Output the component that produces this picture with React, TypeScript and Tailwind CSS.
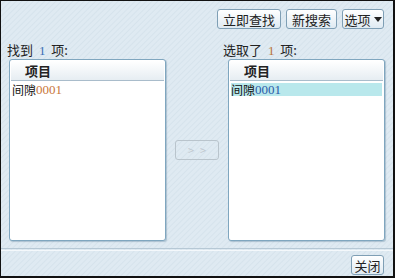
import React from "react";

const cjk = "font-['Noto_Sans_CJK_SC','Liberation_Sans',sans-serif]";
const num = "font-['Liberation_Serif',serif]";

function Btn({ children, className = "" }: { children: React.ReactNode; className?: string }) {
  return (
    <button
      type="button"
      className={`flex h-[20px] items-center justify-center whitespace-nowrap rounded-[3px] border border-[#7f9fb5] bg-gradient-to-b from-white to-[#dfeaf2] text-[13px] leading-none text-[#222] ${cjk} ${className}`}
    >
      {children}
    </button>
  );
}

function ListBox({ selected }: { selected?: boolean }) {
  return (
    <div className="flex h-[182px] w-[157px] flex-col overflow-hidden rounded-[3px] border border-[#7fa6bf] bg-white shadow-[1px_1px_1px_rgba(80,120,150,0.35)]">
      <div className="m-[1px] flex h-[20px] items-center border-b border-[#a9bccb] bg-gradient-to-b from-white to-[#e6edf2] pl-[14px] text-[13px] font-bold text-[#222]">
        项目
      </div>
      <div className="px-[2px] pt-[1px]">
        <div
          className={`flex h-[13px] items-center text-[12px] leading-none text-[#111] ${
            selected ? "bg-[#b9e8ec]" : ""
          }`}
        >
          <span className={cjk}>间隙</span>
          <span className={`${num} text-[13px] ${selected ? "text-[#2a5aa8]" : "text-[#c8763a]"}`}>0001</span>
        </div>
      </div>
    </div>
  );
}

export default function App() {
  return (
    <div className="h-[278px] w-[395px] border-b-2 border-l border-r-2 border-t border-[#111]">
      <div
        className={`flex h-full flex-col bg-[#dbe7f0] bg-[repeating-linear-gradient(135deg,#dfeaf2_0px,#dfeaf2_2px,#d6e3ec_3px,#dfeaf2_4px)] ${cjk}`}
      >
        <div className="flex justify-end gap-[5px] pr-[9px] pt-[8px]">
          <Btn className="w-[64px]">立即查找</Btn>
          <Btn className="w-[51px]">新搜索</Btn>
          <Btn className="w-[42px] gap-[3px]">
            选项
            <svg width="8" height="5" viewBox="0 0 8 5">
              <path d="M0 0h8L4 5z" fill="#222" />
            </svg>
          </Btn>
        </div>

        <div className="mt-[14px] flex">
          <div className="flex flex-col pl-[6px]">
            <div className="h-[15px] whitespace-pre text-[13px] leading-[14px] text-[#222]">
              找到 <span className={`${num} px-[3px] text-[#3b6fb6]`}>1</span> 项:
            </div>
            <div className="ml-[2px] mt-[1px]">
              <ListBox />
            </div>
          </div>
          <div className="flex w-[62px] items-center justify-center pt-[16px]">
            <div className="flex h-[20px] w-[44px] items-center justify-center gap-[6px] rounded-[3px] border border-[#b9c4cc] text-[11px] text-[#bfc8cf]">
              <span>&gt;</span>
              <span>&gt;</span>
            </div>
          </div>
          <div className="flex flex-col">
            <div className="-ml-[5px] h-[15px] whitespace-pre text-[13px] leading-[14px] text-[#222]">
              选取了 <span className={`${num} px-[3px] text-[#b8743a]`}>1</span> 项:
            </div>
            <div className="mt-[1px]">
              <ListBox selected />
            </div>
          </div>
        </div>

        <div className="mt-[7px] h-[2px] border-t border-[#b6c8d5] bg-transparent shadow-[0_1px_0_#f4f8fb]" />

        <div className="flex justify-end pr-[9px] pt-[5px]">
          <Btn className="w-[33px]">关闭</Btn>
        </div>
      </div>
    </div>
  );
}
